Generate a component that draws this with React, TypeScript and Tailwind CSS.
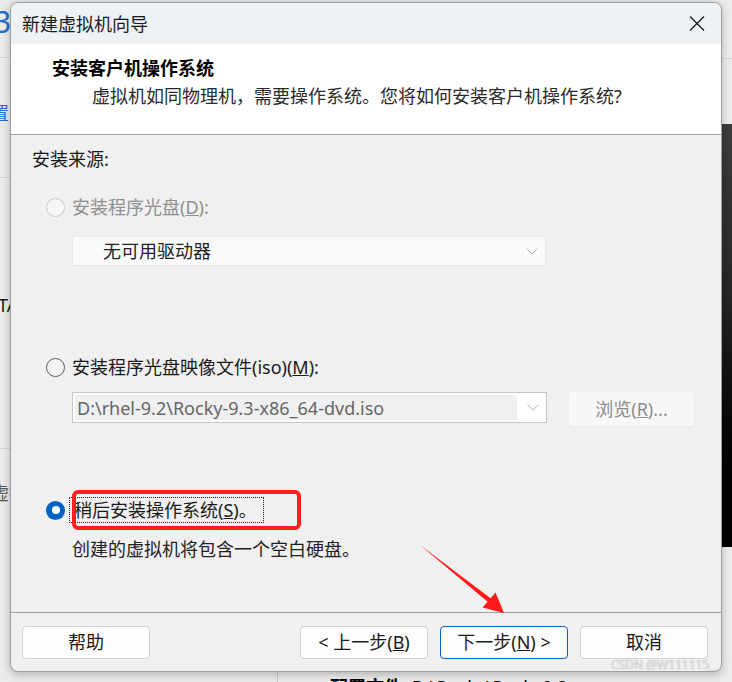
import React from "react";

const FONT = "font-['Noto_Sans','Noto_Sans_CJK_SC',sans-serif]";

function Chevron() {
  return (
    <svg width="12" height="7" viewBox="0 0 12 7" className="shrink-0">
      <path d="M0.5 0.5 L6 6 L11.5 0.5" fill="none" stroke="#b4b4b4" strokeWidth="1" />
    </svg>
  );
}

function Radio({ state }: { state: "disabled" | "off" | "on" }) {
  if (state === "on") {
    return (
      <span className="w-[19px] h-[19px] rounded-full bg-[#0063c4] flex items-center justify-center shrink-0">
        <span className="w-[8px] h-[8px] rounded-full bg-white" />
      </span>
    );
  }
  return (
    <span
      className={
        state === "disabled"
          ? "w-[19px] h-[19px] rounded-full border border-[#c9c9c9] bg-[#f6f6f6] shrink-0"
          : "w-[19px] h-[19px] rounded-full border border-[#5c5c5c] bg-[#f4f4f4] shrink-0"
      }
    />
  );
}

function Button({ children, primary }: { children: React.ReactNode; primary?: boolean }) {
  return (
    <button
      className={
        primary
          ? "w-[128px] h-[33px] rounded-[4px] bg-[#fdfdfd] border border-[#0063c4] text-[18px] text-[#1a1a1a] flex items-center justify-center"
          : "w-[128px] h-[33px] rounded-[4px] bg-[#fdfdfd] border border-[#d2d2d2] text-[18px] text-[#1a1a1a] flex items-center justify-center"
      }
    >
      {children}
    </button>
  );
}

export default function App() {
  return (
    <div className={`relative w-[732px] h-[682px] overflow-hidden bg-[#e9e9e9] ${FONT}`}>
      {/* background app peeking out */}
      <div className="absolute left-0 top-0 w-[12px] h-[682px] bg-[#ebebeb] overflow-hidden">
        <div className="absolute left-[-6px] top-[4px] text-[30px] leading-[36px] text-[#1f6fd1]">3</div>
        <div className="absolute left-0 top-[57px] w-full h-px bg-[#d4d4d4]" />
        <div className="absolute left-[-9px] top-[102px] text-[18px] leading-[22px] text-[#1f6fd1]">置</div>
        <div className="absolute left-0 top-[177px] w-full h-px bg-[#d4d4d4]" />
        <div className="absolute left-[-2px] top-[294px] text-[18px] leading-[22px] text-[#1a1a1a] whitespace-nowrap">TA</div>
        <div className="absolute left-0 top-[448px] w-full h-px bg-[#d4d4d4]" />
        <div className="absolute left-[-9px] top-[482px] text-[18px] leading-[22px] text-[#555] whitespace-nowrap">虚拟</div>
      </div>
      <div className="absolute right-0 top-0 w-[12px] h-[682px] bg-[#ececec]">
        <div className="absolute left-0 top-[58px] w-full h-px bg-[#d6d6d6]" />
        <div className="absolute left-0 top-[124px] w-full h-[423px] bg-gradient-to-b from-[#3c3c3c] via-[#262626] via-40% to-black" />
      </div>
      <div className="absolute left-[277px] top-[668px] w-px h-[14px] bg-[#c8c8c8]" />
      <div className="absolute left-[330px] top-[676px] text-[18px] leading-[22px] text-black whitespace-nowrap">
        <span className="font-bold">配置文件:</span> D:\Rocky\Rocky9.3.vmx
      </div>

      {/* dialog window */}
      <div className="absolute left-[10px] top-[2px] w-[712px] h-[670px] rounded-[8px] border border-[#9c9c9c] overflow-hidden flex flex-col shadow-[0_2px_8px_rgba(0,0,0,0.25)] bg-[#f0f0f0]">
        <div className="h-[41px] bg-[#eef2f5] flex items-center pl-[11px] shrink-0">
          <span className="text-[18px] leading-[24px] text-[#1a1a1a]">新建虚拟机向导</span>
          <svg width="16" height="15" viewBox="0 0 16 15" className="ml-auto mr-[16px]">
            <path d="M1 0.5 L15 14.5 M15 0.5 L1 14.5" stroke="#1a1a1a" strokeWidth="1.3" />
          </svg>
        </div>

        <div className="h-[90px] bg-white pl-[41px] pt-[12px] shrink-0">
          <div className="text-[18px] leading-[24px] font-bold text-black">安装客户机操作系统</div>
          <div className="text-[18px] leading-[24px] text-[#2a2a2a] ml-[40px] mt-[4px]">
            虚拟机如同物理机，需要操作系统。您将如何安装客户机操作系统?
          </div>
        </div>
        <div className="h-px bg-[#a0a0a0] shrink-0" />

        <div className="flex-1 pl-[21px] pt-[12px] flex flex-col text-[18px] leading-[24px] text-[#1a1a1a]">
          <div>安装来源:</div>

          <div className="mt-[24px] ml-[14px] flex items-center gap-[7px]">
            <Radio state="disabled" />
            <span className="text-[#8f8f8f]">
              安装程序光盘(<span className="underline">D</span>):
            </span>
          </div>
          <div className="mt-[17px] ml-[40px] w-[474px] h-[30px] bg-[#fafafa] border border-[#e9e9e9] flex items-center pl-[30px] pr-[7px]">
            <span className="flex-1 text-[#222]">无可用驱动器</span>
            <Chevron />
          </div>

          <div className="mt-[89px] ml-[14px] flex items-center gap-[7px]">
            <Radio state="off" />
            <span>
              安装程序光盘映像文件(iso)(<span className="underline">M</span>):
            </span>
          </div>
          <div className="mt-[12px] ml-[40px] flex items-start">
            <div className="mt-px w-[475px] h-[31px] bg-white border border-[#c6c6c6] flex items-center p-[2px] pr-[7px]">
              <div className="w-[442px] h-full bg-[#f0f0f0] flex items-center pl-[2px] text-[18px] text-[#666] whitespace-nowrap">
                D:\rhel-9.2\Rocky-9.3-x86_64-dvd.iso
              </div>
              <span className="ml-auto">
                <Chevron />
              </span>
            </div>
            <div className="ml-[21px] w-[127px] h-[36px] rounded-[4px] bg-[#f8f8f8] border border-[#ececec] flex items-center justify-center text-[#8c8c8c]">
              浏览(<span className="underline">R</span>)...
            </div>
          </div>

          <div className="mt-[71px] ml-[14px] flex items-center gap-[5px]">
            <Radio state="on" />
            <span className="outline-1 outline-dotted outline-[#222] pl-[4px] pr-[6px]">
              稍后安装操作系统(<span className="underline">S</span>)。
            </span>
          </div>
          <div className="mt-[15px] ml-[40px] text-[#222]">创建的虚拟机将包含一个空白硬盘。</div>
        </div>

        <div className="h-px bg-[#a0a0a0] shrink-0" />
        <div className="h-[58px] shrink-0 flex items-start pt-[13px] pl-[11px] pr-[13px]">
          <Button>帮助</Button>
          <div className="ml-auto flex gap-[12px]">
            <Button>
              &lt; 上一步(<span className="underline">B</span>)
            </Button>
            <Button primary>
              下一步(<span className="underline">N</span>) &gt;
            </Button>
            <Button>取消</Button>
          </div>
        </div>
      </div>

      {/* annotations */}
      <div className="absolute left-[72px] top-[490px] w-[229px] h-[40px] border-[4px] border-[#ff1f1f] rounded-[6px]" />
      <svg className="absolute left-0 top-0 pointer-events-none" width="732" height="682" viewBox="0 0 732 682">
        <polygon
          points="420,545 490.6,598.3 495.5,592.5 504,613 482.5,607.5 487.6,601.7"
          fill="#ff1a1a"
        />
      </svg>
      <div className="absolute left-[611px] top-[658px] text-[12px] leading-[14px] text-[#e4e4e4] whitespace-nowrap [text-shadow:0_0_1px_#a0a0a0]">
        CSDN @W111115_
      </div>
    </div>
  );
}
